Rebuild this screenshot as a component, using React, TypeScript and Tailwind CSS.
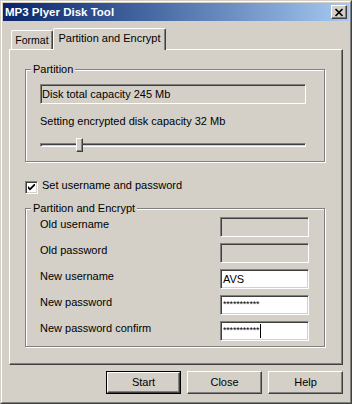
import React from "react";

const raised =
  "border-t border-l border-b border-r border-t-white border-l-white border-b-[#404040] border-r-[#404040] shadow-[inset_-1px_-1px_0_#808080]";
const sunken =
  "border-t border-l border-b border-r border-t-[#808080] border-l-[#808080] border-b-white border-r-white shadow-[inset_1px_1px_0_#404040,inset_-1px_-1px_0_#d4d0c8]";
const etched =
  "relative border border-[#808080] shadow-[inset_1px_1px_0_white,1px_1px_0_white]";

function GroupBox({ title, className, children }: { title: string; className: string; children: React.ReactNode }) {
  return (
    <div className={`${etched} ${className}`}>
      <span className="absolute left-[5px] -top-[7px] px-[2px] bg-[#d4d0c8] leading-[13px]">{title}</span>
      {children}
    </div>
  );
}

function Field({ value, disabled, caret, secret }: { value?: string; disabled?: boolean; caret?: boolean; secret?: boolean }) {
  return (
    <div
      className={`w-[89px] h-[20px] ${sunken} ${disabled ? "bg-[#d4d0c8]" : "bg-white"} flex items-center pl-[2px]`}
    >
      {value && (
        <span className={secret ? "text-[9px] tracking-[-0.2px] leading-[10px] -mt-[2px]" : "leading-[13px]"}>{value}</span>
      )}
      {caret && <span className="w-px h-[14px] bg-black ml-[1px]" />}
    </div>
  );
}

function Row({ label, children }: { label: string; children: React.ReactNode }) {
  return (
    <div className="flex items-start h-[20px]">
      <span className="w-[180px] leading-[13px] pt-px">{label}</span>
      {children}
    </div>
  );
}

function Button({ label, isDefault }: { label: string; isDefault?: boolean }) {
  if (isDefault) {
    return (
      <div className="w-[75px] h-[23px] border border-black">
        <div className={`w-full h-full ${raised} flex items-center justify-center`}>{label}</div>
      </div>
    );
  }
  return <div className={`w-[75px] h-[23px] ${raised} flex items-center justify-center`}>{label}</div>;
}

export default function App() {
  return (
    <div className="w-[352px] h-[404px] bg-[#d4d0c8] font-['Liberation_Sans',Arial,sans-serif] text-[11px] text-black border border-t-[#d4d0c8] border-l-[#d4d0c8] border-b-[#404040] border-r-[#404040]">
      <div className="h-full border border-t-white border-l-white border-b-[#808080] border-r-[#808080] p-px flex flex-col">
        {/* title bar */}
        <div className="h-[18px] flex items-center bg-linear-to-r from-[#0a246a] to-[#a6caf0] pl-[2px] pr-[2px]">
          <span className="flex-1 text-white font-bold text-[11.5px] leading-[14px]">MP3 Plyer Disk Tool</span>
          <div className={`w-[16px] h-[14px] bg-[#d4d0c8] ${raised} flex items-center justify-center`}>
            <svg width="10" height="9" viewBox="0 0 10 9">
              <path d="M1.5 1 L8.5 8 M8.5 1 L1.5 8" stroke="black" strokeWidth="1.7" />
            </svg>
          </div>
        </div>

        <div className="flex flex-col px-[6px]">
          {/* tabs */}
          <div className="mt-[7px] h-[21px] flex items-end pl-[2px]">
            <div className="w-[42px] h-[19px] text-[10.5px] border-t border-l border-r border-t-white border-l-white border-r-[#404040] rounded-t-[2px] shadow-[inset_-1px_0_0_#808080] flex items-center justify-center pt-[2px]">
              Format
            </div>
            <div className="relative z-10 w-[113px] h-[22px] -mb-px bg-[#d4d0c8] border-t border-l border-r border-t-white border-l-white border-r-[#404040] rounded-t-[2px] shadow-[inset_-1px_0_0_#808080] flex items-center justify-center pb-[2px]">
              Partition and Encrypt
            </div>
          </div>

          {/* tab panel */}
          <div className="w-[334px] h-[316px] border-t border-l border-b border-r border-t-white border-l-white border-b-[#404040] border-r-[#404040] shadow-[inset_-1px_-1px_0_#808080] pl-[15px] pt-[19px] flex flex-col">
            <GroupBox title="Partition" className="w-[300px] h-[93px] pl-[14px] pt-[14px]">
              <div className={`w-[266px] h-[20px] ${sunken} flex items-center pl-[1px]`}>
                <span className="leading-[13px]">Disk total capacity 245 Mb</span>
              </div>
              <div className="mt-[11px] leading-[13px]">Setting encrypted disk capacity 32 Mb</div>
              <div className="relative mt-[10px] w-[266px] h-[14px] flex items-center">
                <div className="w-full h-[4px] border-t border-l border-b border-r border-t-[#808080] border-l-[#808080] border-b-white border-r-white shadow-[inset_1px_1px_0_#404040]" />
                <div className={`absolute left-[36px] top-0 w-[7px] h-[14px] bg-[#d4d0c8] ${raised}`} />
              </div>
            </GroupBox>

            <div className="mt-[17px] flex items-start gap-[4px]">
              <div className={`mt-[2px] w-[13px] h-[13px] bg-white ${sunken} flex items-center justify-center`}>
                <svg width="7" height="7" viewBox="0 0 7 7">
                  <path d="M0 2 L0 4.5 L2 6.5 L7 1.5 L7 -1 L2 4 Z" fill="black" />
                </svg>
              </div>
              <span className="leading-[13px]">Set username and password</span>
            </div>

            <GroupBox title="Partition and Encrypt" className="mt-[14px] w-[300px] h-[139px] pl-[14px] pt-[8px] flex flex-col gap-[6px]">
              <Row label="Old username">
                <Field disabled />
              </Row>
              <Row label="Old password">
                <Field disabled />
              </Row>
              <Row label="New username">
                <Field value="AVS" />
              </Row>
              <Row label="New password">
                <Field value="***********" secret />
              </Row>
              <Row label="New password confirm">
                <Field value="***********" secret caret />
              </Row>
            </GroupBox>
          </div>

          {/* buttons */}
          <div className="mt-[6px] flex justify-end gap-[6px]">
            <Button label="Start" isDefault />
            <Button label="Close" />
            <Button label="Help" />
          </div>
        </div>
      </div>
    </div>
  );
}
